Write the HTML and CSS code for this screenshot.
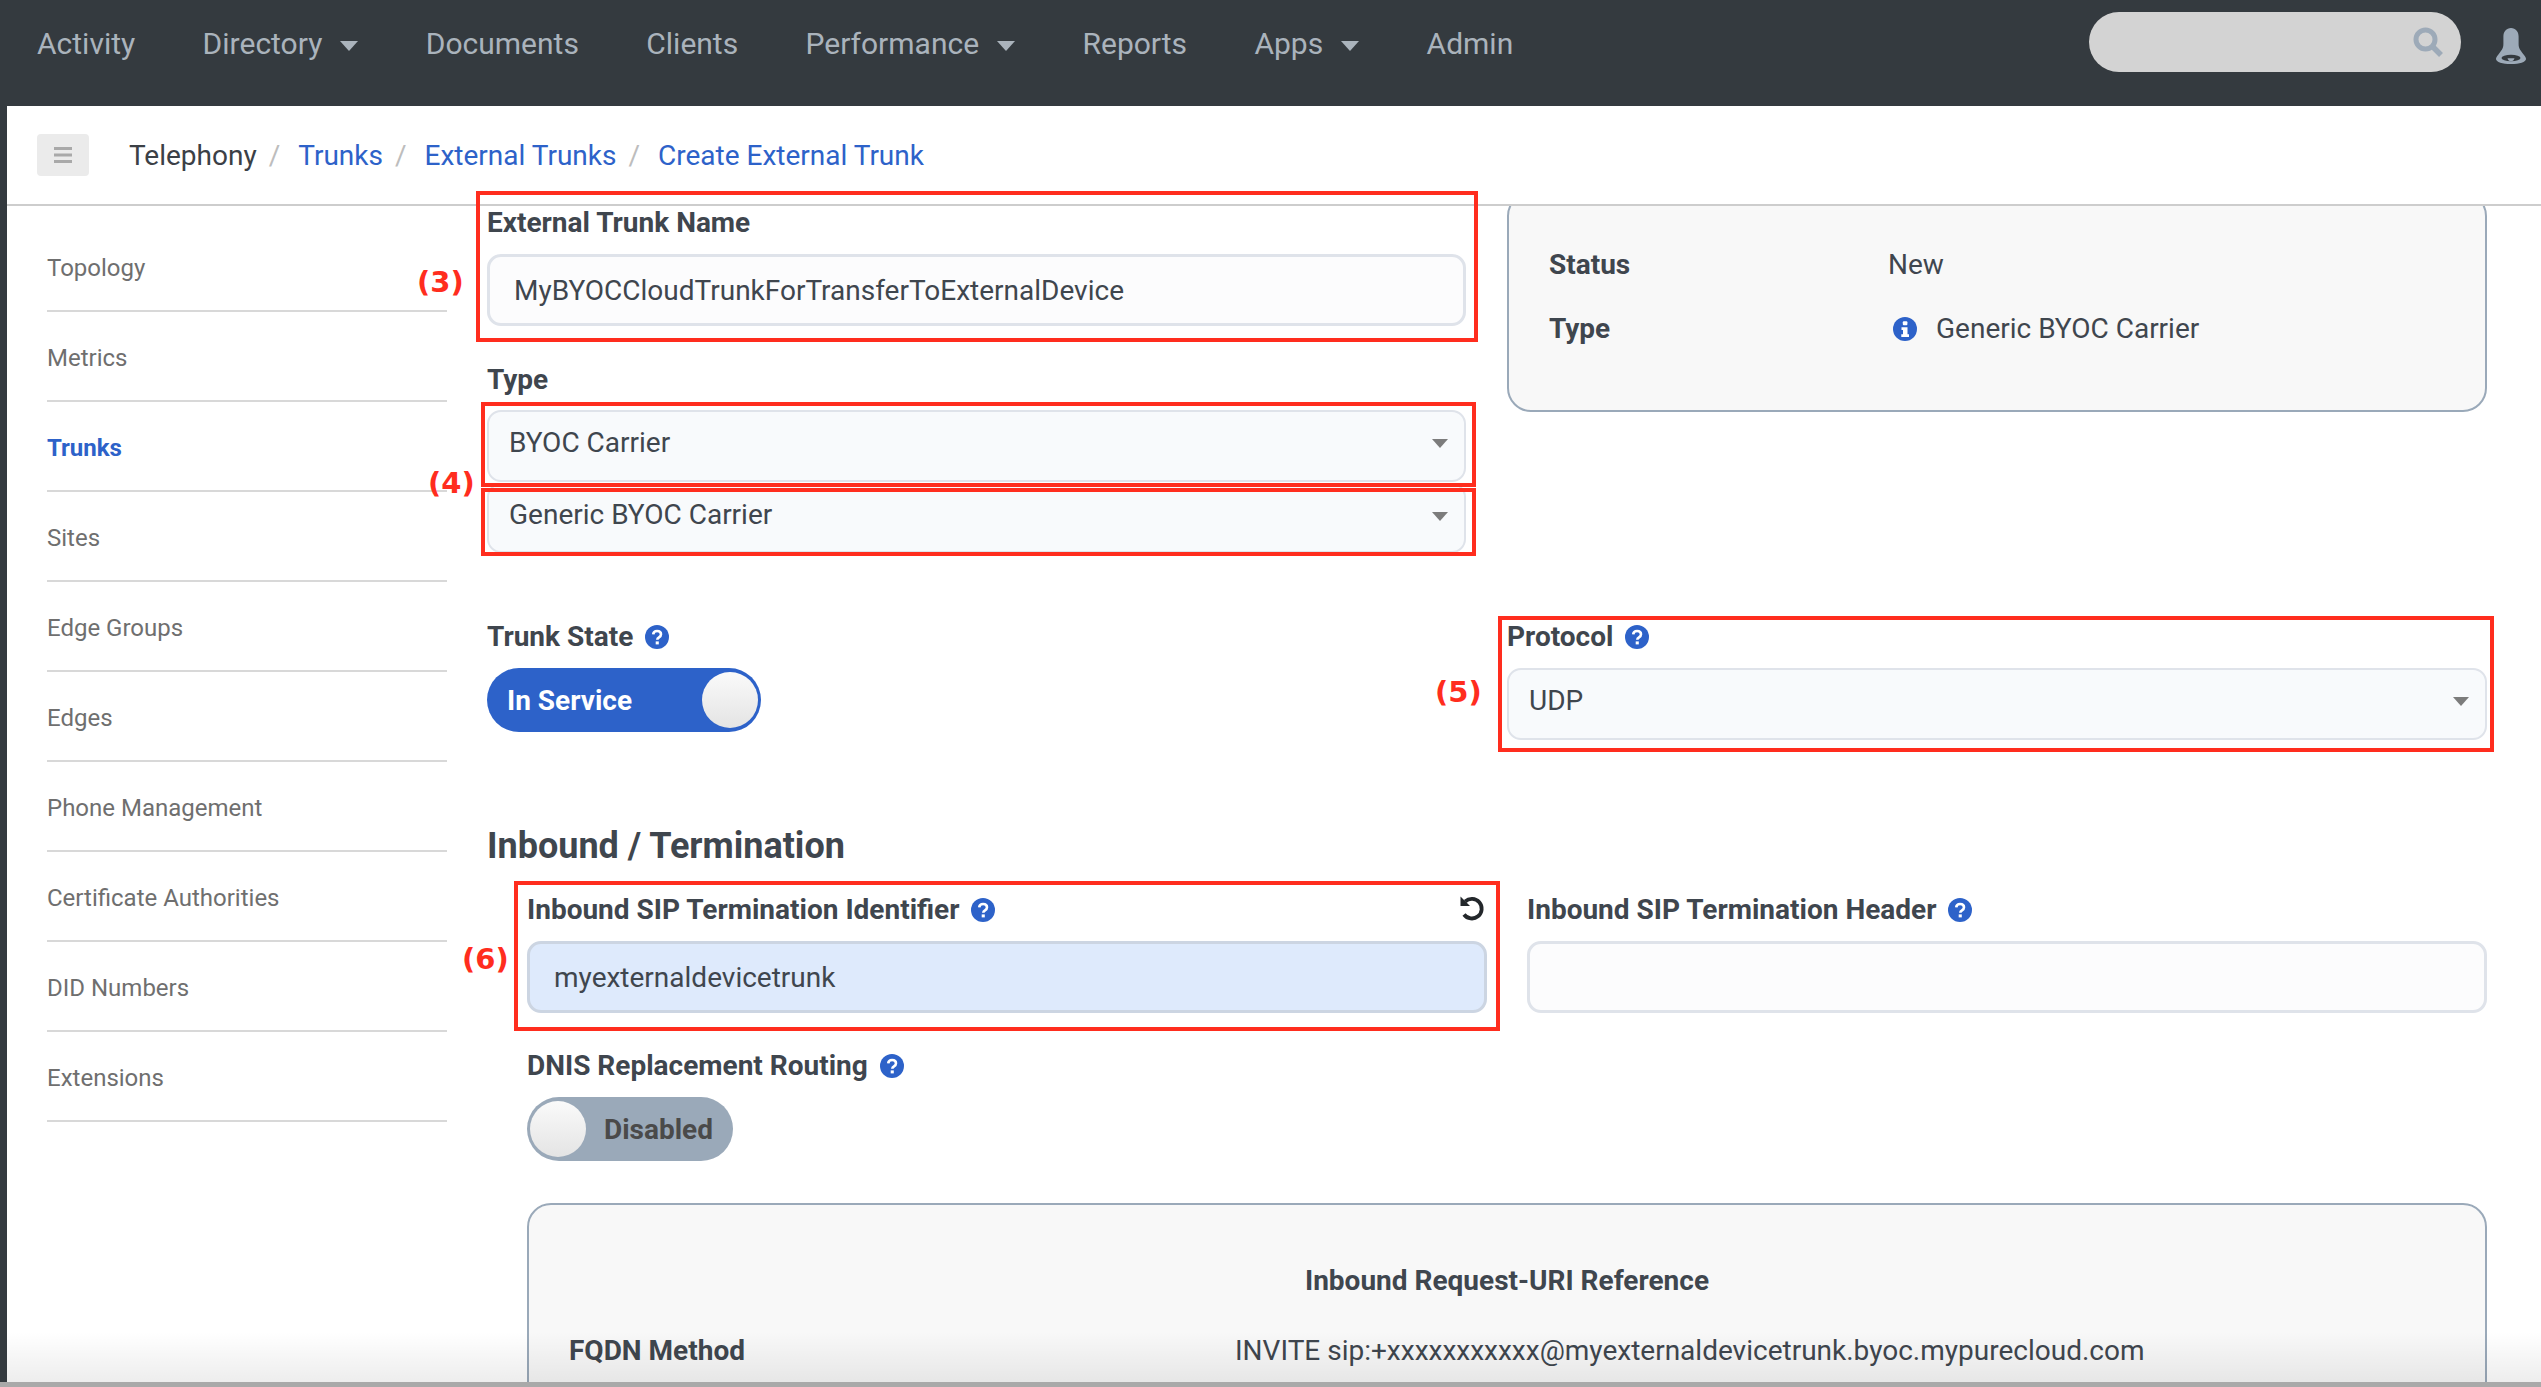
FILE: index.html
```html
<!DOCTYPE html>
<html lang="en">
<head>
<meta charset="utf-8">
<title>Create External Trunk</title>
<link rel="stylesheet" href="styles.css">
</head>
<body>
<svg class="defs" width="0" height="0" aria-hidden="true">
  <symbol id="help" viewBox="0 0 24 24">
    <circle cx="12" cy="12" r="12" fill="#2d62c9"/>
    <path d="M8.2 9.4C8.4 7.2 10 6 12.1 6c2.200 0 3.900 1.300 3.900 3.300 0 1.600-.9 2.400-2 3.100-1.100.7-1.700 1.200-1.700 2.400" fill="none" stroke="#fff" stroke-width="2.600"/>
    <rect x="10.700" y="16.400" width="3.100" height="3" fill="#fff"/>
  </symbol>
</svg>

<header class="topbar">
  <nav class="topnav">
    <a class="topnav-item">Activity</a>
    <a class="topnav-item has-caret">Directory</a>
    <a class="topnav-item">Documents</a>
    <a class="topnav-item">Clients</a>
    <a class="topnav-item has-caret">Performance</a>
    <a class="topnav-item">Reports</a>
    <a class="topnav-item has-caret">Apps</a>
    <a class="topnav-item">Admin</a>
  </nav>
  <div class="searchbox">
    <svg class="search-icon" viewBox="0 0 30 30" aria-hidden="true">
      <circle cx="12.500" cy="12.500" r="9.500" fill="none" stroke="#9daab8" stroke-width="5"/>
      <path d="M19 19l9 9" stroke="#9daab8" stroke-width="5.500"/>
    </svg>
  </div>
  <svg class="bell-icon" viewBox="0 0 30 36" aria-hidden="true">
    <path d="M15 0c4.600 0 7.600 3.600 7.600 8.500v7.500c0 5 2.400 6.800 5 10.500C29.500 29 30 30 30 31c0 3-6.500 5-15 5S0 34 0 31c0-1 .5-2 2.400-4.500 2.600-3.700 5-5.500 5-10.500V8.500C7.400 3.600 10.400 0 15 0z" fill="#9daab8"/>
    <ellipse cx="15" cy="30" rx="9.500" ry="3.200" fill="#343a3f"/>
    <path d="M11.500 30.300h7c-.4 2-1.800 3-3.500 3s-3.100-1-3.500-3z" fill="#9daab8"/>
  </svg>
</header>

<div class="page">
  <div class="crumbs">
    <button class="menu-btn" aria-label="Menu">
      <svg viewBox="0 0 18 16" width="18" height="16" aria-hidden="true">
        <path d="M0 1.500h18M0 8h18M0 14.500h18" stroke="#a9a9a9" stroke-width="3"/>
      </svg>
    </button>
    <ol class="crumb-list">
      <li class="crumb crumb-root">Telephony</li>
      <li class="crumb"><a>Trunks</a></li>
      <li class="crumb"><a>External Trunks</a></li>
      <li class="crumb"><a>Create External Trunk</a></li>
    </ol>
  </div>

  <div class="workspace">
    <aside class="sidebar">
      <a class="side-item">Topology</a>
      <a class="side-item">Metrics</a>
      <a class="side-item is-active">Trunks</a>
      <a class="side-item">Sites</a>
      <a class="side-item">Edge Groups</a>
      <a class="side-item">Edges</a>
      <a class="side-item">Phone Management</a>
      <a class="side-item">Certificate Authorities</a>
      <a class="side-item">DID Numbers</a>
      <a class="side-item">Extensions</a>
    </aside>

    <main class="content">
      <section class="columns">
        <div class="field-stack">
          <label class="label">External Trunk Name</label>
          <input class="text-input" type="text" value="MyBYOCCloudTrunkForTransferToExternalDevice">
          <label class="label label-type">Type</label>
          <div class="select-wrap"><select class="select"><option>BYOC Carrier</option></select></div>
          <div class="select-wrap select-wrap-tight"><select class="select"><option>Generic BYOC Carrier</option></select></div>
        </div>
        <aside class="status-card">
          <dl class="status-list">
            <dt>Status</dt><dd>New</dd>
            <dt>Type</dt>
            <dd class="status-type">
              <svg class="icon-info" viewBox="0 0 24 24" aria-hidden="true">
                <circle cx="12" cy="12" r="12" fill="#2d62c9"/>
                <rect x="9.800" y="4.300" width="4.600" height="4" rx="1" fill="#fff"/>
                <path d="M8.500 10.300h6v7h1.500v2.800H8.300v-2.800h1.700v-4.200H8.500z" fill="#fff"/>
              </svg>
              Generic BYOC Carrier
            </dd>
          </dl>
        </aside>
      </section>

      <section class="columns columns-state">
        <div>
          <label class="label">Trunk State <svg class="icon-help"><use href="#help"/></svg></label>
          <button class="toggle toggle-on"><span>In Service</span><i class="knob"></i></button>
        </div>
        <div>
          <label class="label">Protocol <svg class="icon-help"><use href="#help"/></svg></label>
          <div class="select-wrap"><select class="select"><option>UDP</option></select></div>
        </div>
      </section>

      <h2 class="section-title">Inbound / Termination</h2>

      <div class="inset">
        <section class="columns columns-inbound">
          <div>
            <label class="label label-split">
              <span>Inbound SIP Termination Identifier <svg class="icon-help"><use href="#help"/></svg></span>
              <svg class="icon-reset" viewBox="0 0 26 26" aria-hidden="true">
                <path d="M6.200 6.500A9.800 9.800 0 1 1 5 19.500" fill="none" stroke="#23272b" stroke-width="3.800"/>
                <path d="M1.500 1.500v9.500H11z" fill="#23272b"/>
              </svg>
            </label>
            <input class="text-input text-input-filled" type="text" value="myexternaldevicetrunk">
          </div>
          <div>
            <label class="label">Inbound SIP Termination Header <svg class="icon-help"><use href="#help"/></svg></label>
            <input class="text-input" type="text">
          </div>
        </section>

        <label class="label label-dnis">DNIS Replacement Routing <svg class="icon-help"><use href="#help"/></svg></label>
        <button class="toggle toggle-off"><i class="knob"></i><span>Disabled</span></button>

        <section class="uri-card">
          <h3 class="uri-title">Inbound Request-URI Reference</h3>
          <div class="uri-row">
            <span class="uri-key">FQDN Method</span>
            <span class="uri-value">INVITE sip:+xxxxxxxxxxx@myexternaldevicetrunk.byoc.mypurecloud.com</span>
          </div>
        </section>
      </div>
    </main>
  </div>
  <div class="bottom-fade"></div>
</div>
<div class="window-edge"></div>

<div class="mark mark-3"></div>
<div class="mark mark-4a"></div>
<div class="mark mark-4b"></div>
<div class="mark mark-5"></div>
<div class="mark mark-6"></div>
<span class="mark-num num-3">(3)</span>
<span class="mark-num num-4">(4)</span>
<span class="mark-num num-5">(5)</span>
<span class="mark-num num-6">(6)</span>
</body>
</html>
```

FILE: styles.css
```css
* { box-sizing: border-box; }
html, body { margin: 0; height: 100%; }
body {
  position: relative;
  display: flex;
  flex-direction: column;
  height: 1387px;
  overflow: hidden;
  background: #343a3f;
  font-family: Roboto, "Liberation Sans", sans-serif;
  color: #3f464e;
}
.defs { position: absolute; }

/* Top bar */
.topbar {
  flex: none;
  display: flex;
  align-items: flex-start;
  height: 106px;
  padding-left: 37px;
  background: #343a3f;
}
.topnav { display: flex; align-items: center; gap: 67.4px; flex: 1; height: 86px; }
.topnav-item { display: flex; align-items: center; font-size: 30px; color: #aab3bc; }
.has-caret::after {
  content: "";
  margin: 6px 0 0 18px;
  border-left: 9px solid transparent;
  border-right: 9px solid transparent;
  border-top: 10px solid #aab3bc;
}
.searchbox {
  position: relative;
  width: 372px;
  height: 60px;
  margin-top: 12px;
  border-radius: 30px;
  background: #d3d3d3;
}
.search-icon { position: absolute; top: 15px; right: 18px; width: 30px; height: 30px; }
.bell-icon { width: 30px; height: 36px; margin: 28px 15px 0 35px; }

/* Page shell */
.page {
  position: relative;
  flex: 1;
  min-height: 0;
  display: flex;
  flex-direction: column;
  margin-left: 7px;
  background: #fff;
}
.window-edge { flex: none; height: 5px; background: #a9a9a9; }
.bottom-fade {
  position: absolute;
  left: 0; right: 0; bottom: 0;
  height: 50px;
  background: linear-gradient(rgba(0,0,0,0), rgba(0,0,0,.07));
  pointer-events: none;
}

/* Breadcrumbs */
.crumbs {
  flex: none;
  display: flex;
  align-items: center;
  height: 100px;
  padding: 0 0 0 30px;
  border-bottom: 2px solid #cdcdcd;
}
.menu-btn {
  display: flex;
  align-items: center;
  justify-content: center;
  width: 52px;
  height: 42px;
  margin: 0 40px 0 0;
  padding: 0;
  border: 0;
  border-radius: 4px;
  background: #ebebeb;
}
.crumb-list { display: flex; margin: 0; padding: 0; list-style: none; font-size: 28px; }
.crumb { color: #2d62c9; }
.crumb-root { color: #3b4046; }
.crumb + .crumb::before { content: "/"; margin: 0 18px 0 12px; color: #bdbdbd; }

/* Workspace */
.workspace { flex: 1; min-height: 0; display: flex; overflow: hidden; }
.sidebar {
  flex: none;
  width: 400px;
  margin: 0 40px 0 40px;
  padding-top: 16px;
}
.side-item {
  display: flex;
  align-items: center;
  height: 90px;
  padding-top: 3px;
  border-bottom: 2px solid #d8d8d8;
  font-size: 24px;
  color: #6f6f6f;
}
.side-item.is-active { color: #2d62c9; font-weight: 700; }

.content { flex: 1; min-width: 0; padding-right: 54px; }
.columns { display: grid; grid-template-columns: 979px 980px; column-gap: 41px; }
.columns-state { margin-top: 67px; }
.columns-inbound { grid-template-columns: 960px 960px; column-gap: 40px; }

.label {
  display: flex;
  align-items: center;
  height: 32px;
  margin-bottom: 16px;
  padding-top: 1px;
  font-size: 28px;
  font-weight: 700;
  line-height: 32px;
  color: #3f464e;
  white-space: pre;
}
.label-type { margin: 37px 0 15px; }
.label-dnis { margin-top: 36px; }
.label-split { justify-content: space-between; }
.label-split > span { display: flex; align-items: center; }
.icon-help { flex: none; width: 24px; height: 24px; margin-left: 5px; }
.icon-reset { width: 26px; height: 26px; margin: -4px 2px 0 0; }

.text-input {
  display: block;
  width: 100%;
  height: 72px;
  padding: 0 24px;
  border: 3px solid #dfe3ea;
  border-radius: 14px;
  background: #fcfcfd;
  font: 400 28px Roboto, sans-serif;
  color: #3f464e;
  outline: 0;
}
.text-input-filled { background: #deeafc; border-color: #ccd5e2; }

.select-wrap { position: relative; }
.select-wrap::after {
  content: "";
  position: absolute;
  top: 29px;
  right: 18px;
  border-left: 8px solid transparent;
  border-right: 8px solid transparent;
  border-top: 9px solid #7c7c7c;
  pointer-events: none;
}
.select {
  display: block;
  width: 100%;
  height: 72px;
  padding: 0 20px 8px;
  border: 2px solid #dfe3ea;
  border-radius: 14px;
  background: #f8fafc;
  font: 400 28px Roboto, sans-serif;
  color: #3f464e;
  appearance: none;
  outline: 0;
}
.select-wrap-tight .select { height: 70px; margin-top: 1px; }

/* Status card */
.status-card {
  height: 220px;
  margin-top: -14px;
  border: 2px solid #9aa9b9;
  border-radius: 24px;
  background: #f8f8f8;
}
.status-list {
  display: grid;
  grid-template-columns: 339px 1fr;
  row-gap: 28px;
  margin: 0;
  padding: 53px 0 0 40px;
  font-size: 28px;
  line-height: 36px;
}
.status-list dt { font-weight: 700; }
.status-list dd { margin: 0; }
.status-type { display: flex; align-items: center; gap: 19px; padding-left: 5px; }
.icon-info { width: 24px; height: 24px; }

/* Toggles */
.toggle {
  display: flex;
  align-items: center;
  justify-content: space-between;
  height: 64px;
  padding: 0 3px;
  border: 0;
  border-radius: 32px;
  font: 700 28px Roboto, sans-serif;
}
.toggle-on { width: 274px; padding-left: 20px; background: #2d62c9; color: #fff; }
.toggle-off { width: 206px; padding-right: 20px; background: #9aa9b9; color: #4a4a4a; }
.knob {
  flex: none;
  width: 56px;
  height: 56px;
  border-radius: 50%;
  background: linear-gradient(#fafafa, #e4e4e4);
}

.section-title {
  margin: 84px 0 25px;
  font-size: 36px;
  font-weight: 700;
  line-height: 44px;
  color: #3f464e;
}
.inset { padding-left: 40px; }

.uri-card {
  height: 300px;
  margin-top: 42px;
  border: 2px solid #9aa9b9;
  border-radius: 24px;
  background: #f8f8f8;
}
.uri-title {
  margin: 60px 0 38px;
  font-size: 28px;
  font-weight: 700;
  line-height: 32px;
  text-align: center;
  color: #3f464e;
}
.uri-row {
  display: grid;
  grid-template-columns: 666px 1fr;
  padding-left: 40px;
  font-size: 28px;
  line-height: 32px;
}
.uri-key { font-weight: 700; }

/* Screenshot annotations, drawn over the page */
.mark { position: absolute; border: 4px solid #ff2d1e; pointer-events: none; }
.mark-3 { left: 476px; top: 191px; width: 1002px; height: 151px; }
.mark-4a { left: 481px; top: 402px; width: 995px; height: 85px; }
.mark-4b { left: 481px; top: 488px; width: 995px; height: 68px; }
.mark-5 { left: 1498px; top: 616px; width: 996px; height: 136px; }
.mark-6 { left: 514px; top: 881px; width: 986px; height: 150px; }
.mark-num {
  position: absolute;
  font: 700 29px/32px "DejaVu Sans", sans-serif;
  color: #ff2d1e;
}
.num-3 { left: 417px; top: 266px; }
.num-4 { left: 428px; top: 467px; }
.num-5 { left: 1435px; top: 676px; }
.num-6 { left: 462px; top: 943px; }
```
